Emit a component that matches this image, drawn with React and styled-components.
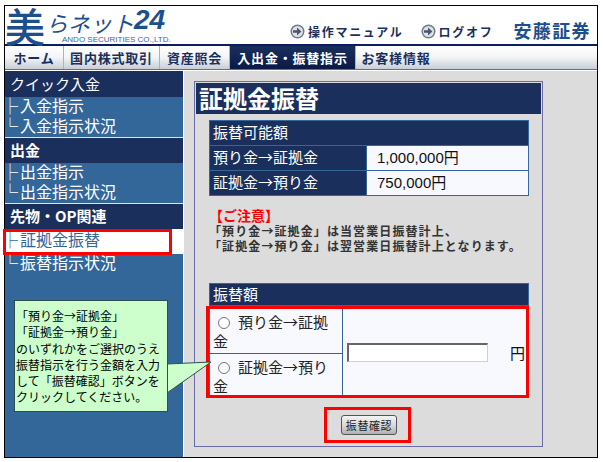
import React from "react";
import styled, { createGlobalStyle } from "styled-components";

const GlobalStyle = createGlobalStyle`
  html, body {
    margin: 0;
    padding: 0;
    background: #fff;
  }
  * {
    box-sizing: border-box;
  }
  body {
    font-family: "Noto Sans CJK JP", "Liberation Sans", sans-serif;
  }
`;

const Frame = styled.div`
  position: relative;
  width: 594px;
  height: 453px;
  margin: 5px 0 0 4px;
  border: 1px solid #000;
  display: flex;
  flex-direction: column;
  background: #fff;
`;

const Header = styled.header`
  height: 40px;
  flex: none;
  display: flex;
  align-items: flex-end;
  justify-content: space-between;
  border-bottom: 2px solid #0b1f60;
`;

const Logo = styled.div`
  position: relative;
  display: flex;
  align-items: flex-start;
  height: 38px;
  color: #1c4f8c;
  white-space: nowrap;
`;

const LogoKanji = styled.span`
  font-size: 40px;
  font-weight: 500;
  line-height: 38px;
  margin-right: 1px;
`;

const LogoKana = styled.span`
  margin-top: 2px;
  font-size: 22px;
  line-height: 28px;
  font-style: italic;
`;

const LogoNum = styled.span`
  font-family: "Liberation Sans", sans-serif;
  font-size: 28px;
  line-height: 28px;
  font-style: italic;
  font-weight: 700;
`;

const LogoSub = styled.span`
  position: absolute;
  left: 57px;
  bottom: 0;
  font-family: "Liberation Sans", sans-serif;
  font-size: 8px;
  line-height: 9px;
  color: #3c659c;
`;

const HeaderRight = styled.div`
  display: flex;
  align-items: center;
  padding: 0 6px 3px 0;
`;

const HeaderLink = styled.a`
  display: flex;
  align-items: center;
  gap: 3px;
  margin: 3px ${(p) => p.$gap}px 0 0;
  font-size: 12px;
  font-weight: 700;
  letter-spacing: 1.7px;
  color: #1a2f5c;
`;

const Brand = styled.span`
  font-size: 18px;
  font-weight: 700;
  letter-spacing: 1.4px;
  color: #1c4f8c;
  line-height: 22px;
`;

const Nav = styled.nav`
  height: 24px;
  flex: none;
  display: flex;
  background: linear-gradient(#fff, #f2f4f6 50%, #c8ced6);
  border-bottom: 1px solid #5f7390;
`;

const Tab = styled.a`
  width: ${(p) => p.$w}px;
  display: flex;
  align-items: center;
  justify-content: center;
  font-size: 13px;
  font-weight: 700;
  letter-spacing: 0.8px;
  white-space: nowrap;
  color: ${(p) => (p.$active ? "#fff" : "#1a2f5c")};
  background: ${(p) => (p.$active ? "linear-gradient(#1a2f5c, #0b1a48)" : "transparent")};
  border-right: 1px solid #a9b4c2;
  &:last-child {
    border-right: 0;
  }
`;

const Body = styled.div`
  flex: 1;
  display: flex;
  min-height: 0;
  background: #dcdcdc;
  border-top: 1px solid #fff;
`;

const Sidebar = styled.aside`
  width: 179px;
  flex: none;
  background: #336699;
  border-right: 1px solid #fff;
`;

const SectionTitle = styled.div`
  height: ${(p) => p.$h}px;
  display: flex;
  align-items: center;
  padding: 0 0 ${(p) => (p.$line ? 3 : 1)}px 5px;
  background: #1a2f5c;
  color: #fff;
  font-size: 15px;
  font-weight: ${(p) => (p.$bold ? 700 : 400)};
  border-top: ${(p) => (p.$line ? "1px solid #e4e4e4" : "0")};
  white-space: nowrap;
`;

const Item = styled.a`
  position: relative;
  display: flex;
  align-items: center;
  height: ${(p) => p.$h || 20}px;
  padding: 0 0 5px 0;
  font-size: 16px;
  line-height: 16px;
  white-space: nowrap;
  color: ${(p) => (p.$active ? "#336699" : "#fff")};
  background: ${(p) => (p.$active ? "#fff" : "transparent")};
`;

const Mark = styled.span`
  margin: 0 2px 0 -3px;
`;

const ActiveRing = styled.span`
  position: absolute;
  left: -2px;
  top: 0;
  width: 169px;
  height: 26px;
  border: 3px solid #f00;
`;

const Main = styled.main`
  flex: 1;
  padding: 10px 54px 10px 10px;
`;

const Panel = styled.section`
  height: 100%;
  border: 1px solid #6a6aa8;
  padding: 1px;
`;

const Title = styled.h1`
  margin: 0;
  height: 31px;
  padding-left: 3px;
  background: #1a2f5c;
  color: #fff;
  font-size: 24px;
  font-weight: 700;
  line-height: 30px;
`;

const Table = styled.table`
  width: 320px;
  margin: ${(p) => p.$top}px 0 0 13px;
  border-collapse: collapse;
  table-layout: fixed;
  font-size: 15px;
  color: #111;
`;

const HeadCell = styled.th`
  height: ${(p) => p.$h}px;
  padding: 0 0 3px 3px;
  background: #1a2f5c;
  color: #fff;
  font-weight: 400;
  text-align: left;
  border: 1px solid #336699;
  white-space: nowrap;
`;

const ValueCell = styled.td`
  padding: 0 0 3px 10px;
  background: #f8f8ff;
  border: 1px solid #336699;
  white-space: nowrap;
  font-family: "Liberation Sans", "Noto Sans CJK JP", sans-serif;
`;

const Note = styled.div`
  margin: 12px 0 0 13px;
  font-size: 12px;
  font-weight: 700;
  line-height: 15px;
  letter-spacing: 1.1px;
  color: #333;
  white-space: nowrap;
`;

const NoteTitle = styled.div`
  color: #f00;
  font-size: 14px;
  letter-spacing: 0;
`;

const FormWrap = styled.div`
  width: 320px;
  margin: 30px 0 0 13px;
`;

const FormHead = styled.div`
  height: 23px;
  padding-left: 3px;
  background: #1a2f5c;
  border: 1px solid #336699;
  color: #fff;
  font-size: 15px;
  line-height: 19px;
`;

const FormGrid = styled.div`
  display: grid;
  grid-template-columns: 133px 1fr;
  width: 317px;
  height: 86px;
  margin-top: 3px;
  background: #f8f8ff;
  border-left: 1px solid #336699;
  box-shadow: 0 0 0 3px #f00;
`;

const Choices = styled.div`
  display: grid;
  grid-template-rows: 44px 1fr;
  border-right: 1px solid #336699;
`;

const Choice = styled.label`
  padding: 3px 10px 0 3px;
  font-size: 15px;
  line-height: 19px;
  color: #222;
  border-top: ${(p) => (p.$line ? "1px solid #336699" : "0")};
`;

const Radio = styled.input`
  width: 12px;
  height: 12px;
  margin: 0 8px 0 5px;
  vertical-align: -1px;
`;

const Amount = styled.div`
  display: flex;
  align-items: center;
  padding-left: 4px;
  font-size: 15px;
  color: #111;
`;

const AmountInput = styled.input`
  width: 141px;
  height: 19px;
  padding: 0;
  background: #fff;
  border-style: solid;
  border-width: 2px 1px 1px 2px;
  border-color: #666 #d4d0c8 #d4d0c8 #666;
  margin-right: 22px;
`;

const ButtonRing = styled.div`
  width: 81px;
  height: 30px;
  margin: 15px 0 0 131px;
  padding-left: 3px;
  display: flex;
  align-items: center;
  justify-content: center;
  box-shadow: 0 0 0 3px #f00;
`;

const ConfirmButton = styled.button`
  width: 56px;
  height: 20px;
  padding: 0;
  font-family: inherit;
  font-size: 11px;
  letter-spacing: 0.6px;
  color: #222;
  border: 1px solid #555;
  border-radius: 3px;
  background: linear-gradient(#f4f4f4, #d8d8d8 55%, #b0b0b0);
`;

const Callout = styled.div`
  position: absolute;
  left: 9px;
  top: 294px;
  width: 154px;
  height: 112px;
  padding: 7px 0 0 1px;
  background: #ccffcc;
  border: 1px solid #2f4f4f;
  font-size: 12px;
  line-height: 16.3px;
  color: #000;
  white-space: nowrap;
`;

const CalloutTail = styled.svg`
  position: absolute;
  left: 162px;
  top: 350px;
`;

function ArrowIcon() {
  return (
    <svg width="15" height="15" viewBox="0 0 15 15">
      <circle cx="7.5" cy="7.5" r="7" fill="#6f7a8c" />
      <circle cx="7.5" cy="7.5" r="5.5" fill="#dfe2e8" />
      <path d="M3 6.2h4V3.6l4.4 3.9L7 11.4V8.8H3z" fill="#4c566a" />
    </svg>
  );
}

export default function App() {
  return (
    <>
      <GlobalStyle />
      <Frame>
        <Header>
          <Logo>
            <LogoKanji>美</LogoKanji>
            <LogoKana>らネット</LogoKana>
            <LogoNum>24</LogoNum>
            <LogoSub>ANDO SECURITIES CO.,LTD.</LogoSub>
          </Logo>
          <HeaderRight>
            <HeaderLink $gap={17}>
              <ArrowIcon />
              操作マニュアル
            </HeaderLink>
            <HeaderLink $gap={20}>
              <ArrowIcon />
              ログオフ
            </HeaderLink>
            <Brand>安藤証券</Brand>
          </HeaderRight>
        </Header>
        <Nav>
          <Tab $w={59}>ホーム</Tab>
          <Tab $w={96}>国内株式取引</Tab>
          <Tab $w={70}>資産照会</Tab>
          <Tab $w={126} $active>
            入出金・振替指示
          </Tab>
          <Tab $w={80}>お客様情報</Tab>
        </Nav>
        <Body>
          <Sidebar>
            <SectionTitle $h={26}>クイック入金</SectionTitle>
            <Item>
              <Mark>├</Mark>入金指示
            </Item>
            <Item>
              <Mark>└</Mark>入金指示状況
            </Item>
            <SectionTitle $h={26} $line $bold>
              出金
            </SectionTitle>
            <Item>
              <Mark>├</Mark>出金指示
            </Item>
            <Item>
              <Mark>└</Mark>出金指示状況
            </Item>
            <SectionTitle $h={26} $line $bold>
              先物・OP関連
            </SectionTitle>
            <Item $active $h={25}>
              <Mark>├</Mark>証拠金振替
              <ActiveRing />
            </Item>
            <Item>
              <Mark>└</Mark>振替指示状況
            </Item>
          </Sidebar>
          <Main>
            <Panel>
              <Title>証拠金振替</Title>
              <Table $top={6}>
                <colgroup>
                  <col width="157" />
                  <col />
                </colgroup>
                <tbody>
                  <tr>
                    <HeadCell colSpan={2} $h={25}>
                      振替可能額
                    </HeadCell>
                  </tr>
                  <tr>
                    <HeadCell $h={25}>預り金→証拠金</HeadCell>
                    <ValueCell>1,000,000円</ValueCell>
                  </tr>
                  <tr>
                    <HeadCell $h={25}>証拠金→預り金</HeadCell>
                    <ValueCell>750,000円</ValueCell>
                  </tr>
                </tbody>
              </Table>
              <Note>
                <NoteTitle>【ご注意】</NoteTitle>
                「預り金→証拠金」は当営業日振替計上、
                <br />
                「証拠金→預り金」は翌営業日振替計上となります。
              </Note>
              <FormWrap>
                <FormHead>振替額</FormHead>
                <FormGrid>
                  <Choices>
                    <Choice>
                      <Radio type="radio" name="kind" />
                      預り金→証拠金
                    </Choice>
                    <Choice $line>
                      <Radio type="radio" name="kind" />
                      証拠金→預り金
                    </Choice>
                  </Choices>
                  <Amount>
                    <AmountInput type="text" />円
                  </Amount>
                </FormGrid>
              </FormWrap>
              <ButtonRing>
                <ConfirmButton>振替確認</ConfirmButton>
              </ButtonRing>
            </Panel>
          </Main>
        </Body>
        <CalloutTail width="46" height="40" viewBox="0 0 46 40">
          <path d="M0 8 L44 6 L0 37 Z" fill="#ccffcc" />
          <path d="M0 8 L44 6 L0 37" fill="none" stroke="#2f4f4f" />
        </CalloutTail>
        <Callout>
          「預り金→証拠金」
          <br />
          「証拠金→預り金」
          <br />
          のいずれかをご選択のうえ
          <br />
          振替指示を行う金額を入力
          <br />
          して「振替確認」ボタンを
          <br />
          クリックしてください。
        </Callout>
      </Frame>
    </>
  );
}
